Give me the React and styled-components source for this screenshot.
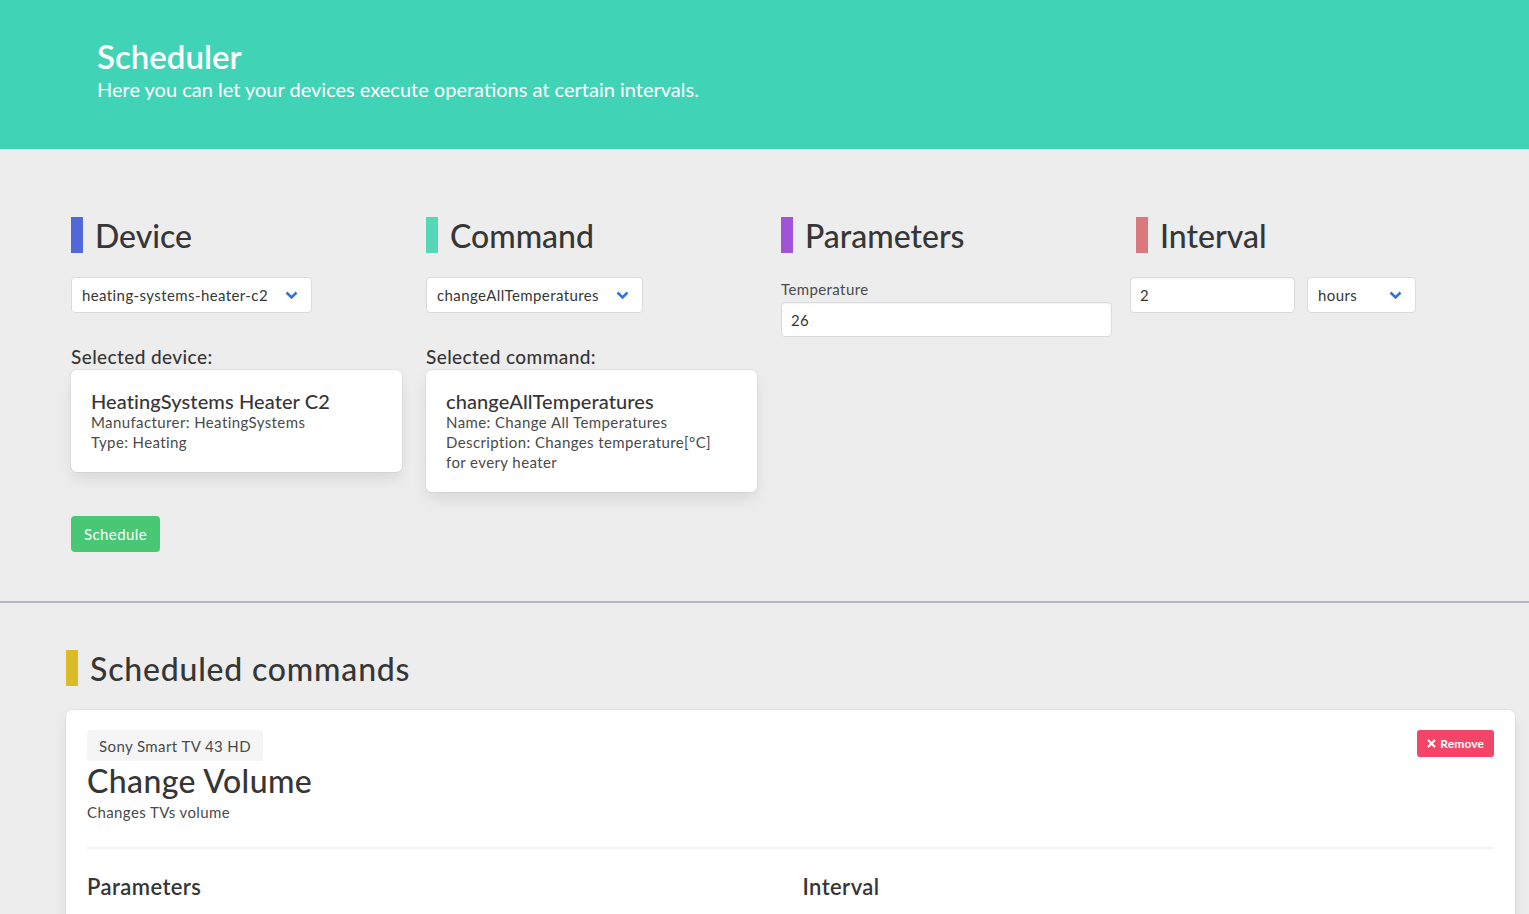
import styled, { createGlobalStyle } from 'styled-components';

const GlobalStyle = createGlobalStyle`
    html, body {
        margin: 0;
        padding: 0;
        background: #ededed;
        font-family: Lato, "Noto Sans", "Liberation Sans", sans-serif;
        color: #4a4a4a;
        letter-spacing: 0.025em;
    }
    * { box-sizing: border-box; }
`;

const Hero = styled.header`
    background: #41d3b6;
    height: 149px;
    padding: 36px 97px 0;
    color: #fff;
    letter-spacing: 0;
`;

const HeroTitle = styled.h1`
    margin: 0;
    font-size: 33px;
    font-weight: 600;
    line-height: 40px;
`;

const HeroSubtitle = styled.p`
    margin: 0;
    font-size: 20px;
    line-height: 26px;
`;

const Section = styled.section`
    padding: ${p => p.$pad};
    border-bottom: ${p => (p.$divider ? '2px solid #b5b5c9' : 'none')};
`;

const Columns = styled.div`
    display: grid;
    grid-template-columns: repeat(4, 331px);
    column-gap: 24px;
    align-items: start;
`;

const Column = styled.div`
    display: flex;
    flex-direction: column;
`;

const Heading = styled.h2`
    display: flex;
    align-items: center;
    gap: 12px;
    margin: 0;
    height: 36px;
    font-size: 32px;
    font-weight: 500;
    color: #363636;
    letter-spacing: ${p => p.$spacing || '0'};

    &::before {
        content: '';
        width: 12px;
        height: 36px;
        background: ${p => p.$color};
    }
`;

const Controls = styled.div`
    display: flex;
    gap: 12px;
    margin-top: 24px;
    margin-left: ${p => p.$shift || '0'};
`;

const Select = styled.div`
    display: flex;
    align-items: center;
    justify-content: space-between;
    gap: 12px;
    height: 36px;
    width: ${p => p.$width || 'auto'};
    padding: 0 13px 0 10px;
    background: #fff;
    border: 1px solid #dbdbdb;
    border-radius: 4px;
    font-size: 15px;
    color: #363636;
`;

const Input = styled.div`
    display: flex;
    align-items: center;
    height: ${p => p.$height || '36px'};
    width: ${p => p.$width || '100%'};
    padding: 0 9px;
    background: #fff;
    border: 1px solid #dbdbdb;
    border-radius: 4px;
    box-shadow: inset 0 1px 2px rgba(10, 10, 10, 0.05);
    font-size: 15px;
    color: #363636;
`;

const ParamField = styled.div`
    margin-top: 26px;
    display: flex;
    flex-direction: column;
    gap: 3px;

    label {
        font-size: 15px;
        line-height: 20px;
        color: #4a4a4a;
    }
`;

const SelectedLabel = styled.div`
    margin-top: 31px;
    font-size: 19px;
    font-weight: 500;
    line-height: 26px;
    color: #363636;
`;

const Box = styled.div`
    background: #fff;
    border-radius: 6px;
    padding: 20px 24px 20px 20px;
    box-shadow: 0 0.5em 1em -0.125em rgba(10, 10, 10, 0.1), 0 0 0 1px rgba(10, 10, 10, 0.04);
`;

const BoxTitle = styled.div`
    font-size: 20px;
    font-weight: 500;
    line-height: 22px;
    color: #363636;
    letter-spacing: 0.005em;
`;

const BoxLine = styled.div`
    font-size: 15px;
    line-height: 20px;
    color: #4a4a4a;
`;

const ScheduleButton = styled.button`
    margin-top: 24px;
    height: 36px;
    padding: 0 13px;
    border: none;
    border-radius: 4px;
    background: #48c774;
    color: #fff;
    font-family: inherit;
    font-size: 15px;
    letter-spacing: inherit;
`;

const ScheduledCard = styled(Box)`
    margin-top: 24px;
    padding: 20px 21px;
    min-height: 260px;
`;

const CardHead = styled.div`
    display: flex;
    justify-content: space-between;
    align-items: flex-start;
`;

const Tag = styled.span`
    display: inline-flex;
    align-items: center;
    height: 31px;
    padding: 0 12px;
    background: #f5f5f5;
    border-radius: 4px;
    font-size: 15px;
    color: #4a4a4a;
`;

const RemoveButton = styled.button`
    display: inline-flex;
    align-items: center;
    gap: 4px;
    height: 27px;
    padding: 0 10px;
    border: none;
    border-radius: 3px;
    background: #f14668;
    color: #fff;
    font-family: inherit;
    font-size: 12px;
    font-weight: 700;
    letter-spacing: 0.01em;
`;

const CommandName = styled.div`
    font-size: 32px;
    font-weight: 500;
    line-height: 40px;
    color: #363636;
`;

const CommandDesc = styled.div`
    font-size: 15px;
    line-height: 22px;
    color: #4a4a4a;
`;

const Rule = styled.hr`
    margin: 24px 0 0;
    border: none;
    height: 2px;
    background: #f2f2f2;
`;

const DetailColumns = styled.div`
    display: grid;
    grid-template-columns: 1fr 1fr;
    column-gap: 24px;
    padding-top: 24px;
`;

const DetailTitle = styled.div`
    font-size: 22px;
    font-weight: 600;
    color: #363636;
`;

const Chevron = () => (
    <svg width="13" height="9" viewBox="0 0 13 9">
        <polyline points="1.5,1.5 6.5,6.5 11.5,1.5" fill="none" stroke="#3273dc" strokeWidth="2.6" />
    </svg>
);

const Cross = () => (
    <svg width="9" height="9" viewBox="0 0 9 9">
        <path d="M1 1 L8 8 M8 1 L1 8" stroke="#fff" strokeWidth="2.2" />
    </svg>
);

const App = () => (
    <>
        <GlobalStyle />
        <Hero>
            <HeroTitle>Scheduler</HeroTitle>
            <HeroSubtitle>Here you can let your devices execute operations at certain intervals.</HeroSubtitle>
        </Hero>

        <Section $pad="68px 0 49px 71px" $divider>
            <Columns>
                <Column>
                    <Heading $color="#5068d9">Device</Heading>
                    <Controls>
                        <Select $width="241px">heating-systems-heater-c2 <Chevron /></Select>
                    </Controls>
                    <SelectedLabel>Selected device:</SelectedLabel>
                    <Box>
                        <BoxTitle>HeatingSystems Heater C2</BoxTitle>
                        <BoxLine>Manufacturer: HeatingSystems</BoxLine>
                        <BoxLine>Type: Heating</BoxLine>
                    </Box>
                </Column>
                <Column>
                    <Heading $color="#55d6b7">Command</Heading>
                    <Controls>
                        <Select $width="217px">changeAllTemperatures <Chevron /></Select>
                    </Controls>
                    <SelectedLabel>Selected command:</SelectedLabel>
                    <Box>
                        <BoxTitle>changeAllTemperatures</BoxTitle>
                        <BoxLine>Name: Change All Temperatures</BoxLine>
                        <BoxLine>Description: Changes temperature[°C] for every heater</BoxLine>
                    </Box>
                </Column>
                <Column>
                    <Heading $color="#a052d9">Parameters</Heading>
                    <ParamField>
                        <label>Temperature</label>
                        <Input $height="35px">26</Input>
                    </ParamField>
                </Column>
                <Column>
                    <Heading $color="#d9797e">Interval</Heading>
                    <Controls $shift="-6px">
                        <Input $width="165px">2</Input>
                        <Select $width="109px">hours <Chevron /></Select>
                    </Controls>
                </Column>
            </Columns>
            <ScheduleButton>Schedule</ScheduleButton>
        </Section>

        <Section $pad="47px 14px 0 66px">
            <Heading $color="#dcbc27" $spacing="0.025em">Scheduled commands</Heading>
            <ScheduledCard>
                <CardHead>
                    <Tag>Sony Smart TV 43 HD</Tag>
                    <RemoveButton><Cross />Remove</RemoveButton>
                </CardHead>
                <CommandName>Change Volume</CommandName>
                <CommandDesc>Changes TVs volume</CommandDesc>
                <Rule />
                <DetailColumns>
                    <DetailTitle>Parameters</DetailTitle>
                    <DetailTitle>Interval</DetailTitle>
                </DetailColumns>
            </ScheduledCard>
        </Section>
    </>
);

export default App;
